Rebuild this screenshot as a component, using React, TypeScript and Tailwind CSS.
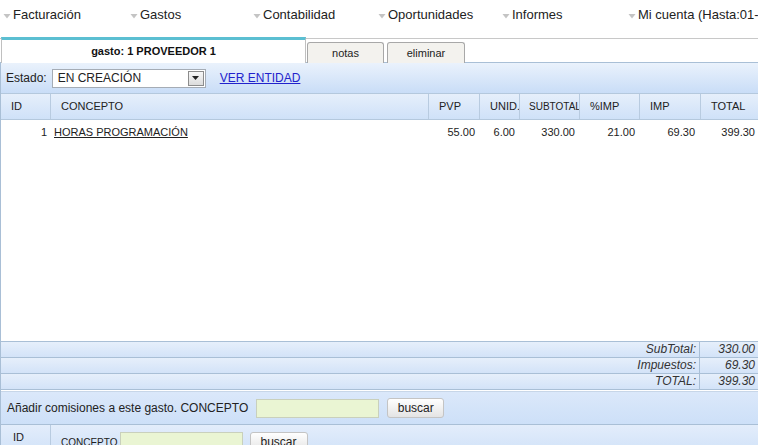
import React from "react";

const navItems = [
  { n: "Facturación", w: "w-[127px]" },
  { n: "Gastos", w: "w-[123px]" },
  { n: "Contabilidad", w: "w-[125px]" },
  { n: "Oportunidades", w: "w-[124px]" },
  { n: "Informes", w: "w-[126px]" },
  { n: "Mi cuenta (Hasta:01-01-2020)", w: "w-[200px]" },
];

function Arrow() {
  return (
    <svg width="8" height="5" viewBox="0 0 8 5" className="mr-[2px] mt-[3px] shrink-0">
      <path d="M0.5 0 L7.5 0 L4 4.5 Z" fill="#c4c4c4" />
    </svg>
  );
}

const cols = [
  { label: "ID", w: "w-[50px]", p: "pl-[10px]" },
  { label: "CONCEPTO", w: "w-[378px]", p: "pl-[10px]" },
  { label: "PVP", w: "w-[51px]", p: "pl-[10px]" },
  { label: "UNID.", w: "w-[40px]", p: "pl-[10px]" },
  { label: "SUBTOTAL", w: "w-[60px]", p: "pl-[9px] text-[10px]" },
  { label: "%IMP", w: "w-[60px]", p: "pl-[10px]" },
  { label: "IMP", w: "w-[61px]", p: "pl-[10px]" },
  { label: "TOTAL", w: "w-[70px]", p: "pl-[10px]" },
];

export default function App() {
  return (
    <div className="w-[758px] h-[445px] overflow-hidden bg-white text-[#222]" style={{ fontFamily: '"Liberation Sans", Arial, sans-serif' }}>
      {/* top nav */}
      <div className="h-[30px] flex items-center whitespace-nowrap text-[13px] pl-[3px]">
        {navItems.map((it) => (
          <div key={it.n} className={`flex items-center ${it.w} shrink-0`}>
            <Arrow />
            <span>{it.n}</span>
          </div>
        ))}
      </div>
      {/* tabs */}
      <div className="pt-[8px]">
        <div className="h-[24px] border-t border-[#c8c8c8] flex items-start">
          <div className="ml-[1px] -mt-[2px] w-[305px] h-[26px] border-t-[3px] border-[#5bbfd2] border-x border-x-[#c0c0c0] bg-white flex items-center justify-center text-[11px] font-bold text-[#111]">
            gasto: 1 PROVEEDOR 1
          </div>
          <div className="mt-[3px] ml-[1px] w-[77px] h-[21px] border border-b-0 border-[#a8a8a8] rounded-t-[3px] bg-[#f3f2ee] flex items-center justify-center text-[11px]">
            notas
          </div>
          <div className="mt-[3px] ml-[3px] w-[78px] h-[21px] border border-b-0 border-[#a8a8a8] rounded-t-[3px] bg-[#f3f2ee] flex items-center justify-center text-[11px]">
            eliminar
          </div>
        </div>
      </div>
      {/* panel */}
      <div className="border-l border-[#a9bfd6]">
        {/* toolbar */}
        <div className="h-[31px] border-t border-[#a9bfd6] bg-linear-to-b from-[#eaf2fc] to-[#c9ddf7] flex items-center pl-[5px] text-[12px]">
          <span>Estado:</span>
          <div className="ml-[5px] w-[154px] h-[19px] bg-white border border-[#a5acb5] flex items-center justify-between">
            <span className="pl-[5px] text-[12px]">EN CREACIÓN</span>
            <div className="w-[16px] h-[15px] mr-[1px] border border-[#8c8c8c] bg-linear-to-b from-[#f7f7f7] to-[#dcdcdc] flex items-center justify-center">
              <svg width="7" height="4" viewBox="0 0 7 4"><path d="M0 0 L7 0 L3.5 4 Z" fill="#222" /></svg>
            </div>
          </div>
          <a className="ml-[14px] text-[#2222cc] underline text-[12px]">VER ENTIDAD</a>
        </div>
        {/* grid header */}
        <div className="h-[27px] border-t border-b border-[#b4c8dd] bg-linear-to-b from-[#e6effb] to-[#cfe1f8] flex text-[11px]">
          {cols.map((c, i) => (
            <div key={c.label} className={`${c.w} ${c.p} shrink-0 h-full flex items-center whitespace-nowrap overflow-hidden ${i < cols.length - 1 ? "border-r border-[#b8cbe0]" : ""}`}>
              {c.label}
            </div>
          ))}
        </div>
        {/* body */}
        <div className="h-[221px] bg-white">
          <div className="flex text-[11px] pt-[5px] h-[19px] items-center">
            <div className="w-[50px] text-right pr-[4px]">1</div>
            <div className="w-[378px] pl-[3px]"><span className="underline">HORAS PROGRAMACIÓN</span></div>
            <div className="w-[51px] text-right pr-[5px]">55.00</div>
            <div className="w-[40px] text-right pr-[5px]">6.00</div>
            <div className="w-[60px] text-right pr-[5px]">330.00</div>
            <div className="w-[60px] text-right pr-[5px]">21.00</div>
            <div className="w-[61px] text-right pr-[6px]">69.30</div>
            <div className="w-[57px] text-right pr-[3px]">399.30</div>
          </div>
        </div>
        {/* totals */}
        <div className="border-t border-[#a9bfd6] text-[12px] italic text-[#333]">
          {[["SubTotal:", "330.00"], ["Impuestos:", "69.30"], ["TOTAL:", "399.30"]].map(([l, v]) => (
            <div key={l} className="h-[16px] flex border-b border-[#a9bfd6] bg-linear-to-b from-[#e6effb] to-[#d3e3f8]">
              <div className="w-[699px] border-r border-[#a9bfd6] text-right pr-[3px] leading-[15px]">{l}</div>
              <div className="flex-1 text-right pr-[3px] leading-[15px]">{v}</div>
            </div>
          ))}
        </div>
        {/* add row */}
        <div className="mt-[1px] border-t border-[#c7d6e8] h-[34px] bg-linear-to-b from-[#dbe8fa] to-[#cde0f8] flex items-center pl-[6px] text-[12px] border-b border-b-[#a9bfd6]">
          <span>Añadir comisiones a este gasto. CONCEPTO</span>
          <div className="ml-[8px] w-[123px] h-[19px] bg-[#eaf5d3] border border-[#c9d0bc]" />
          <div className="ml-[8px] w-[57px] h-[20px] rounded-[3px] border border-[#c4c4c4] bg-linear-to-b from-[#ffffff] to-[#e4e4e4] flex items-center justify-center text-[12px] text-[#222]">buscar</div>
        </div>
        {/* second header */}
        <div className="h-[30px] bg-linear-to-b from-[#e3edfb] to-[#cfe1f8] flex text-[11px]">
          <div className="w-[50px] border-r border-[#b8cbe0] pl-[12px] pt-[4px]">ID</div>
          <div className="flex items-start pt-[7px] pl-[10px]">
            <span className="mt-[3px] text-[10px]">CONCEPTO</span>
            <div className="ml-[2px] w-[123px] h-[19px] bg-[#eaf5d3] border border-[#c9d0bc]" />
            <div className="ml-[7px] w-[58px] h-[20px] rounded-[3px] border border-[#c4c4c4] bg-linear-to-b from-[#ffffff] to-[#e4e4e4] flex items-center justify-center text-[12px] text-[#222]">buscar</div>
          </div>
        </div>
      </div>
    </div>
  );
}
